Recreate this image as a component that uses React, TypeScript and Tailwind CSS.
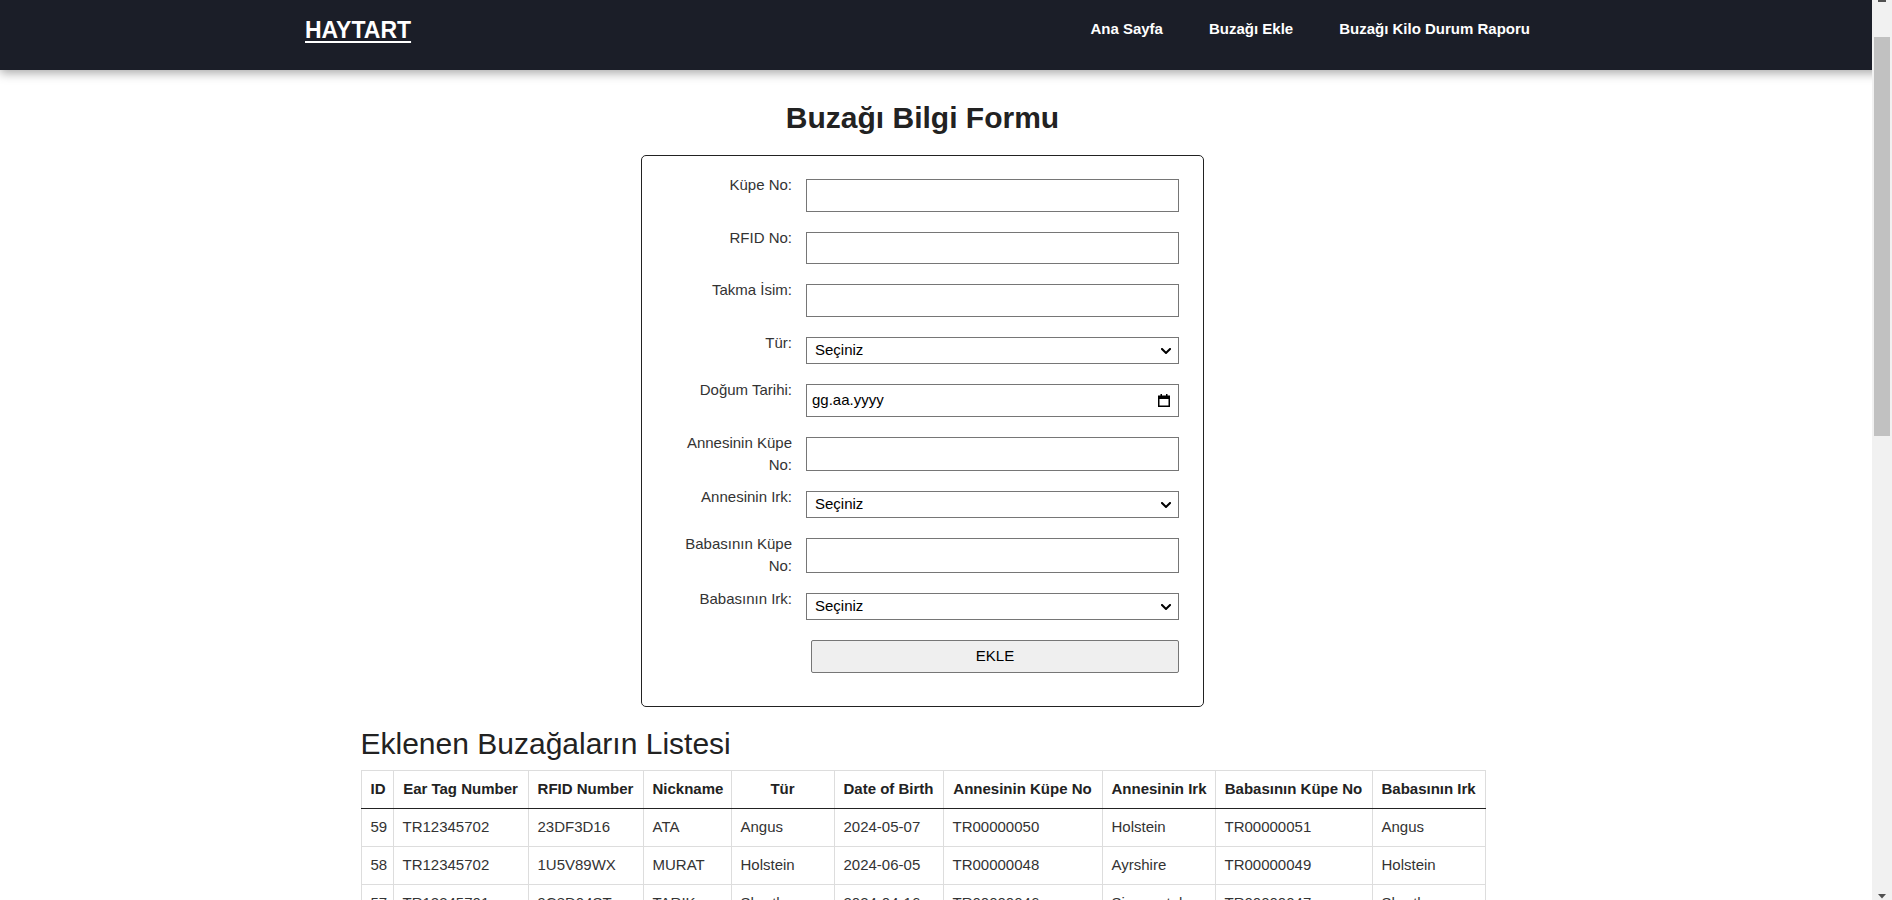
import React from "react";

type Row = [number, string, string, string, string, string, string, string, string, string];

const rows: Row[] = [
  [59, "TR12345702", "23DF3D16", "ATA", "Angus", "2024-05-07", "TR00000050", "Holstein", "TR00000051", "Angus"],
  [58, "TR12345702", "1U5V89WX", "MURAT", "Holstein", "2024-06-05", "TR00000048", "Ayrshire", "TR00000049", "Holstein"],
  [57, "TR12345701", "9C8D04ST", "TARIK", "Shorthorn", "2024-04-16", "TR00000046", "Simmental", "TR00000047", "Shorthorn"],
  [56, "TR12345700", "7K2L19PQ", "BOZKURT", "Angus", "2024-03-22", "TR00000044", "Jersey", "TR00000045", "Angus"],
  [55, "TR12345699", "5H6J73RT", "SARIKIZ", "Jersey", "2024-03-02", "TR00000042", "Holstein", "TR00000043", "Jersey"],
  [54, "TR12345698", "3F4G58MN", "KARABAŞ", "Simmental", "2024-02-18", "TR00000040", "Simmental", "TR00000041", "Holstein"],
  [53, "TR12345697", "8B1C27XZ", "PAMUK", "Holstein", "2024-02-01", "TR00000038", "Angus", "TR00000039", "Holstein"],
  [52, "TR12345696", "2D9E46UV", "ALACA", "Ayrshire", "2024-01-15", "TR00000036", "Ayrshire", "TR00000037", "Jersey"],
];

const headers = [
  "ID",
  "Ear Tag Number",
  "RFID Number",
  "Nickname",
  "Tür",
  "Date of Birth",
  "Annesinin Küpe No",
  "Annesinin Irk",
  "Babasının Küpe No",
  "Babasının Irk",
];

const colWidths = ["w-[32px]", "w-[135px]", "w-[115px]", "w-[88px]", "w-[103px]", "w-[109px]", "w-[159px]", "w-[113px]", "w-[157px]", "w-[113px]"];

function Label({ children }: { children: React.ReactNode }) {
  return (
    <label className="-mt-[5px] w-[126px] shrink-0 text-right text-[15px] leading-[22px] text-[#333]">
      {children}
    </label>
  );
}

function TextRow({ label, h }: { label: string; h: string }) {
  return (
    <div className={`mb-[20px] flex items-start gap-[14px] ${h}`}>
      <Label>{label}</Label>
      <input
        type="text"
        className="h-full w-[373px] border border-[#767676] bg-white px-[2px] text-[15px] outline-none"
      />
    </div>
  );
}

function SelectRow({ label }: { label: string }) {
  return (
    <div className="mb-[20px] flex h-[27px] items-start gap-[14px]">
      <Label>{label}</Label>
      <div className="relative h-full w-[373px]">
        <select className="h-full w-full appearance-none rounded-none border border-[#767676] bg-white pl-[8px] text-[15px] text-black outline-none">
          <option>Seçiniz</option>
        </select>
        <svg
          className="pointer-events-none absolute right-[8px] top-[11px]"
          width="10"
          height="6"
          viewBox="0 0 10 6"
        >
          <path d="M1 1l4 4 4-4" fill="none" stroke="#000" strokeWidth="2" strokeLinecap="square" />
        </svg>
      </div>
    </div>
  );
}

function DateRow({ label }: { label: string }) {
  return (
    <div className="mb-[20px] flex h-[33px] items-start gap-[14px]">
      <Label>{label}</Label>
      <div className="relative flex h-full w-[373px] items-center border border-[#767676] bg-white pl-[5px] text-[15px] text-black">
        <span>gg.aa.yyyy</span>
        <svg
          className="pointer-events-none absolute right-[8px] top-[9px]"
          width="12"
          height="13"
          viewBox="0 0 12 13"
        >
          <rect x="0.75" y="2.25" width="10.5" height="10" fill="none" stroke="#000" strokeWidth="1.5" />
          <rect x="0" y="2" width="12" height="3" fill="#000" />
          <rect x="2.5" y="0" width="1.5" height="2.5" fill="#000" />
          <rect x="8" y="0" width="1.5" height="2.5" fill="#000" />
        </svg>
      </div>
    </div>
  );
}

export default function App() {
  return (
    <div className="relative h-[900px] w-full overflow-hidden bg-white font-['Liberation_Sans',Arial,sans-serif] text-[15px] text-[#333]">
      <header className="relative z-10 flex h-[70px] items-start bg-[#1b1e28] pl-[305px] pr-[362px] pt-[17px] shadow-[0_3px_10px_rgba(0,0,0,0.35)]">
        <a className="text-[23px] font-bold leading-[26px] text-white underline decoration-2 underline-offset-[3px]">
          HAYTART
        </a>
        <nav className="ml-auto mt-[3px] flex gap-[46px] text-[15px] font-bold leading-[17px] text-white">
          <a>Ana Sayfa</a>
          <a>Buzağı Ekle</a>
          <a>Buzağı Kilo Durum Raporu</a>
        </nav>
      </header>

      <main className="flex w-[1845px] flex-col items-center">
        <h1 className="mt-[31px] text-[30px] font-bold leading-[34px] text-[#222]">Buzağı Bilgi Formu</h1>

        <form className="mt-[20px] w-[563px] rounded-[5px] border border-[#222] px-[24px] pb-[33px] pt-[23px]">
          <TextRow label="Küpe No:" h="h-[33px]" />
          <TextRow label="RFID No:" h="h-[32px]" />
          <TextRow label="Takma İsim:" h="h-[33px]" />
          <SelectRow label="Tür:" />
          <DateRow label="Doğum Tarihi:" />
          <TextRow label="Annesinin Küpe No:" h="h-[34px]" />
          <SelectRow label="Annesinin Irk:" />
          <TextRow label="Babasının Küpe No:" h="h-[35px]" />
          <SelectRow label="Babasının Irk:" />
          <div className="flex">
            <button
              type="button"
              className="ml-[145px] h-[33px] w-[368px] rounded-[2px] border border-[#767676] bg-[#efefef] text-[15px] text-black"
            >
              EKLE
            </button>
          </div>
        </form>

        <section className="mt-[20px] w-[1124px]">
          <h2 className="mb-[9px] text-[30px] font-normal leading-[34px] text-[#222]">Eklenen Buzağaların Listesi</h2>
          <table className="w-[1124px] table-fixed border-collapse text-[15px]">
            <colgroup>
              {colWidths.map((w, i) => (
                <col key={i} className={w} />
              ))}
            </colgroup>
            <thead>
              <tr className="h-[38px]">
                {headers.map((h) => (
                  <th
                    key={h}
                    className="whitespace-nowrap border border-[#ddd] border-b-[#222] px-[9px] text-center font-bold text-[#222]"
                  >
                    {h}
                  </th>
                ))}
              </tr>
            </thead>
            <tbody>
              {rows.map((r) => (
                <tr key={r[0]} className="h-[38px]">
                  {r.map((c, i) => (
                    <td key={i} className="whitespace-nowrap border border-[#ddd] px-[9px] text-left text-[#333]">
                      {c}
                    </td>
                  ))}
                </tr>
              ))}
            </tbody>
          </table>
        </section>
      </main>

      <div className="absolute right-0 top-0 z-20 h-[900px] w-[20px] bg-[#f1f1f1]">
        <div className="absolute left-[6px] top-0 h-[2px] w-[8px] bg-[#505050]" />
        <div className="absolute left-[2px] top-[37px] h-[399px] w-[16px] bg-[#c1c1c1]" />
        <svg className="absolute bottom-[1px] left-[6px]" width="8" height="5" viewBox="0 0 8 5">
          <polygon points="0,0 8,0 4,4.5" fill="#505050" />
        </svg>
      </div>
    </div>
  );
}
